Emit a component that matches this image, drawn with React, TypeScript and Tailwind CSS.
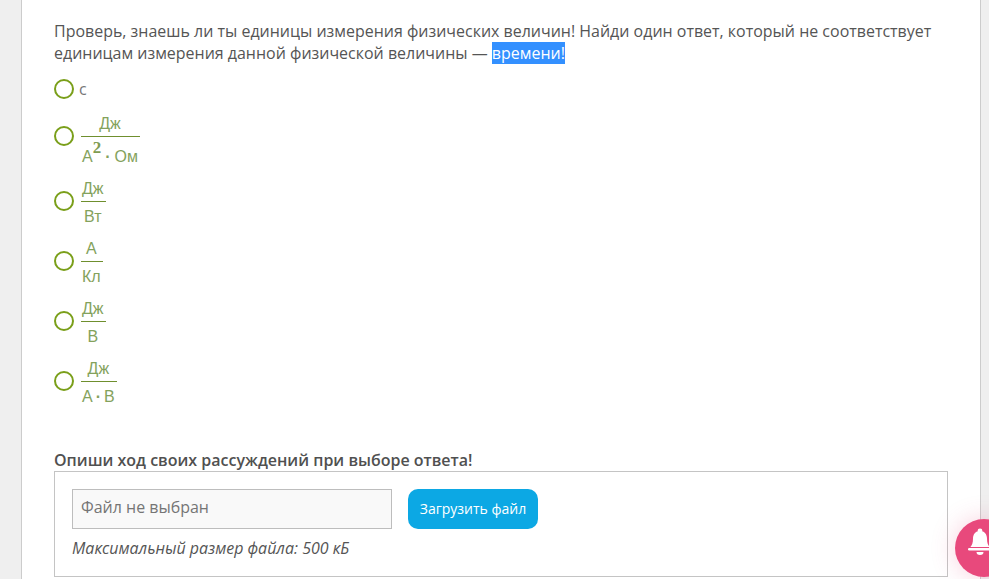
import React from "react";

function Radio({ top }: { top: string }) {
  return (
    <span
      className={`block w-[20px] h-[20px] shrink-0 rounded-full border-[2.5px] border-[#7a9f1a] bg-white ${top}`}
    />
  );
}

function Fraction({
  num,
  den,
  tall,
}: {
  num: React.ReactNode;
  den: React.ReactNode;
  tall?: boolean;
}) {
  return (
    <div className="ml-[7px] inline-flex flex-col items-stretch text-[#84a25c] font-['Liberation_Sans',sans-serif] text-[16px]">
      <div className="h-[24px] leading-[22px] pl-[1px] pr-[2px] text-center border-b border-[#6f8f2e]">
        {num}
      </div>
      <div
        className={`${tall ? "h-[29px] leading-[40px]" : "h-[24px] leading-[29px]"} pl-[1px] pr-[2px] text-center whitespace-nowrap`}
      >
        {den}
      </div>
    </div>
  );
}

function Answer({
  num,
  den,
  tall,
}: {
  num: React.ReactNode;
  den: React.ReactNode;
  tall?: boolean;
}) {
  return (
    <div className="flex items-start">
      <Radio top="mt-[13px]" />
      <Fraction num={num} den={den} tall={tall} />
    </div>
  );
}

export default function App() {
  return (
    <div className="h-[579px] overflow-hidden bg-[#efefef] font-['Open_Sans',sans-serif] text-[15.98px] text-[#555555]">
      <div className="relative ml-[21px] w-[960px] h-[579px] bg-white border-x border-[#cccccc] pl-[32px] pr-[32px] pt-[20px]">
        <p className="leading-[22px]">
          Проверь, знаешь ли ты единицы измерения физических величин! Найди один
          ответ, который не соответствует единицам измерения данной физической
          величины — <span className="bg-[#3390ff] text-white">времени!</span>
        </p>

        <div className="mt-[15px] flex flex-col gap-[12px]">
          <div className="flex items-start">
            <Radio top="mt-0" />
            <span className="ml-[5px] leading-[20px] text-[16px] text-[#777777]">с</span>
          </div>
          <div className="flex flex-col gap-[12px] mt-[2px]">
            <Answer
              tall
              num="Дж"
              den={
                <>
                  А
                  <sup className="text-[17px] font-bold font-['Liberation_Serif',serif] text-[#7f9c52] align-baseline relative -top-[9px]">
                    2
                  </sup>
                  <span className="mx-[4px] font-bold">·</span>Ом
                </>
              }
            />
            <Answer num="Дж" den="Вт" />
            <Answer num="А" den="Кл" />
            <Answer num="Дж" den="В" />
            <Answer
              num="Дж"
              den={
                <>
                  А<span className="mx-[3px] font-bold">·</span>В
                </>
              }
            />
          </div>
        </div>

        <h3 className="mt-[43px] text-[16px] font-semibold leading-[22px] text-[#505050]">
          Опиши ход своих рассуждений при выборе ответа!
        </h3>
        <div className="h-[106px] border border-[#c4c4c4] pl-[17px] pt-[17px]">
          <div className="flex gap-[16px]">
            <div className="flex items-center w-[320px] h-[40px] border border-[#bdbdbd] bg-[#f9f9f9] pl-[8px] pb-[3px] text-[#757575]">
              Файл не выбран
            </div>
            <button className="w-[130px] h-[40px] rounded-[10px] bg-[#0ca8e4] text-white text-[14px] font-medium pb-[2px]">
              Загрузить файл
            </button>
          </div>
          <p className="mt-[8px] leading-[22px] italic text-[#555555]">
            Максимальный размер файла: 500 кБ
          </p>
        </div>
      </div>

      <div className="fixed left-[955px] top-[519px] w-[58px] h-[58px] rounded-full bg-[#e8497c] shadow-[0_0_24px_rgba(232,73,124,0.25)] flex items-start pl-[13px] pt-[9px]">
        <svg viewBox="0 0 24 30" width="24" height="30" fill="white">
          <circle cx="12" cy="3" r="2.4" />
          <path d="M12 3c-4.6 0-7 3.4-7 7.6 0 4.4-1 6.6-2.6 8.4h19.2C20 17.2 19 15 19 10.6 19 6.4 16.6 3 12 3z" />
          <rect x="0" y="20" width="24" height="2.4" rx="1.2" />
          <path d="M8.5 24h7a3.5 3 0 0 1-7 0z" />
        </svg>
      </div>
    </div>
  );
}
